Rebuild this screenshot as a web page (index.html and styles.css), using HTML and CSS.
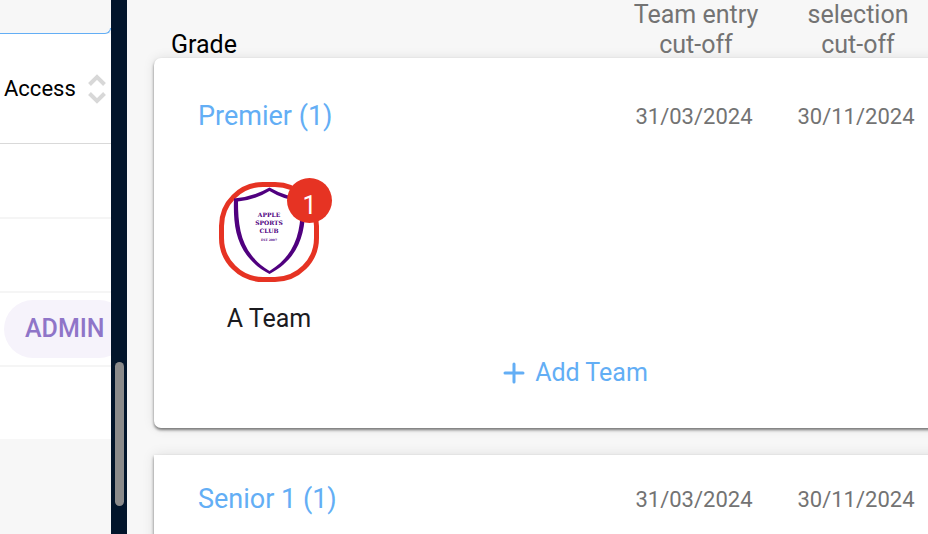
FILE: index.html
```html
<!DOCTYPE html>
<html lang="en">
  <head>
    <meta charset="UTF-8" />
    <meta name="viewport" content="width=device-width, initial-scale=1.0" />
    <title>Team Entries</title>
    <link rel="stylesheet" href="styles.css">
  </head>
  <body>
    <div class="page">
      <aside class="members">
        <div class="filter"></div>
        <table class="access-table">
          <thead>
            <tr>
              <th>
                <button class="sort" type="button">
                  Access
                  <svg class="sort-icon" width="18" height="30" viewBox="0 0 18 30" fill="none" stroke="#d8d8d8" stroke-width="4">
                    <path d="M1.500 10.500 L9 3 L16.500 10.500" />
                    <path d="M1.500 19.500 L9 27 L16.500 19.500" />
                  </svg>
                </button>
              </th>
            </tr>
          </thead>
          <tbody>
            <tr><td></td></tr>
            <tr><td></td></tr>
            <tr><td><span class="role">ADMIN</span></td></tr>
            <tr><td></td></tr>
          </tbody>
        </table>
      </aside>

      <div class="scrollbar">
        <div class="thumb"></div>
      </div>

      <main class="grades">
        <div class="row headings">
          <span class="grade-heading">Grade</span>
          <span class="cutoff">Team entry cut-off</span>
          <span class="cutoff">selection cut-off</span>
        </div>

        <section class="card">
          <div class="row">
            <a class="grade" href="#premier">Premier (1)</a>
            <span class="date">31/03/2024</span>
            <span class="date">30/11/2024</span>
          </div>
          <div class="team">
            <div class="avatar">
              <svg class="crest" width="90" height="90" viewBox="0 0 90 90" role="img" aria-label="Apple Sports Club">
                <path d="M10 11.500 Q29 10 45.500 0.500 Q62 10 81 11.500 C82 41 79 69 45.500 87 C12 69 9 41 10 11.500 Z" fill="#50007f" />
                <path d="M14 14.500 Q31 13 45.500 4 Q60 13 77 14.500 C77 43 73 67 45.500 84 C18 67 14 43 14 14.500 Z" fill="#fff" />
                <g class="crest-text">
                  <text x="45" y="30">APPLE</text>
                  <text x="45" y="38">SPORTS</text>
                  <text x="45" y="46">CLUB</text>
                  <text class="est" x="45" y="54">EST 2007</text>
                </g>
              </svg>
              <span class="badge">1</span>
            </div>
            <span class="team-name">A Team</span>
          </div>
          <button class="add-team" type="button">
            <svg width="22" height="22" viewBox="0 0 22 22" fill="none" stroke="currentColor" stroke-width="3" stroke-linecap="round">
              <path d="M11 2 V20 M2 11 H20" />
            </svg>
            Add Team
          </button>
        </section>

        <section class="card next">
          <div class="row">
            <a class="grade" href="#senior-1">Senior 1 (1)</a>
            <span class="date">31/03/2024</span>
            <span class="date">30/11/2024</span>
          </div>
        </section>
      </main>
    </div>
  </body>
</html>
```
FILE: styles.css
```css
* {
  box-sizing: border-box;
}

body {
  margin: 0;
  font-family: Roboto, sans-serif;
  color: #000;
  background-color: #f7f7f7;
}

button {
  padding: 0;
  border: none;
  background: none;
  font-family: inherit;
  cursor: pointer;
}

a {
  text-decoration: none;
}

.page {
  display: grid;
  grid-template-columns: 111px 16px 1fr;
  grid-template-rows: 100vh;
  height: 100vh;
  overflow: hidden;
}

/* Members list */
.members {
  overflow: hidden;
}

.filter {
  height: 34px;
  border-right: 1px solid #63aef5;
  border-bottom: 1px solid #63aef5;
  border-bottom-right-radius: 6px;
  clip-path: inset(28px 0 0 0);
}

.access-table {
  width: 100%;
  border-spacing: 0;
  background-color: #fff;
}

.access-table th {
  height: 110px;
  padding: 0 4px;
  border-bottom: 1px solid #d9d9d9;
  text-align: left;
}

.sort {
  display: flex;
  align-items: center;
  gap: 12px;
  font-size: 22px;
  color: #000;
}

.access-table td {
  height: 74px;
  padding: 0 4px;
  border-bottom: 2px solid #f5f5f5;
}

.access-table tr:first-child td {
  height: 75px;
}

.access-table tr:last-child td {
  height: 72px;
  border-bottom: none;
}

.role {
  display: block;
  width: 124px;
  padding: 0 21px;
  border-radius: 29px;
  background-color: #f6f3fb;
  color: #8f75c8;
  font-size: 25px;
  font-weight: 500;
  line-height: 58px;
}

.scrollbar {
  display: grid;
  grid-template-rows: 362fr 144fr 28fr;
  padding: 0 3px 0 4px;
  background-color: #02152b;
}

.thumb {
  grid-row: 2;
  border-radius: 5px;
  background-color: #8b8b8b;
}

/* Grades, the panel runs on past the right edge */
.grades {
  margin-right: -69px;
  padding-left: 27px;
}

.row {
  display: grid;
  grid-template-columns: 1fr 162px 162px;
  align-items: center;
  padding-right: 60px;
}

.headings {
  align-items: end;
  height: 58px;
  padding: 0 58px 1px 17px;
  font-size: 25px;
  line-height: 30px;
}

.cutoff {
  padding: 0 16px;
  color: #737373;
  text-align: center;
}

.card {
  display: flex;
  flex-direction: column;
  height: 370px;
  padding: 38px 0;
  border-radius: 7px;
  background-color: #fff;
  box-shadow: 0 2px 3px rgba(0, 0, 0, 0.5), 0 0 12px rgba(0, 0, 0, 0.1);
}

.card .row {
  padding-left: 44px;
}

.card.next {
  margin-top: 27px;
  border-radius: 0;
  padding-top: 24px;
}

.grade {
  color: #63aef5;
  font-size: 27px;
  line-height: 40px;
}

.date {
  color: #737373;
  font-size: 22px;
  text-align: center;
}

.team {
  display: flex;
  flex-direction: column;
  align-items: center;
  gap: 21px;
  width: 100px;
  margin: 46px 0 0 65px;
}

.avatar {
  position: relative;
  width: 100px;
  height: 100px;
  border: 5px solid #e63323;
  border-radius: 44px;
}

.crest {
  display: block;
}

.crest-text {
  fill: #50007f;
  font-family: "DejaVu Serif", serif;
  font-size: 6px;
  font-weight: bold;
  text-anchor: middle;
}

.crest-text .est {
  font-size: 3px;
}

.badge {
  position: absolute;
  top: -9px;
  right: -18px;
  width: 45px;
  height: 45px;
  padding-top: 5px;
  border-radius: 50%;
  background-color: #e63323;
  color: #fff;
  font-size: 25px;
  line-height: 45px;
  text-align: center;
}

.team-name {
  color: #1b1b1f;
  font-size: 25px;
  line-height: 32px;
  white-space: nowrap;
}

.add-team {
  display: flex;
  align-items: center;
  align-self: center;
  gap: 10px;
  margin-top: 22px;
  color: #63aef5;
  font-size: 25px;
  line-height: 32px;
}
```
